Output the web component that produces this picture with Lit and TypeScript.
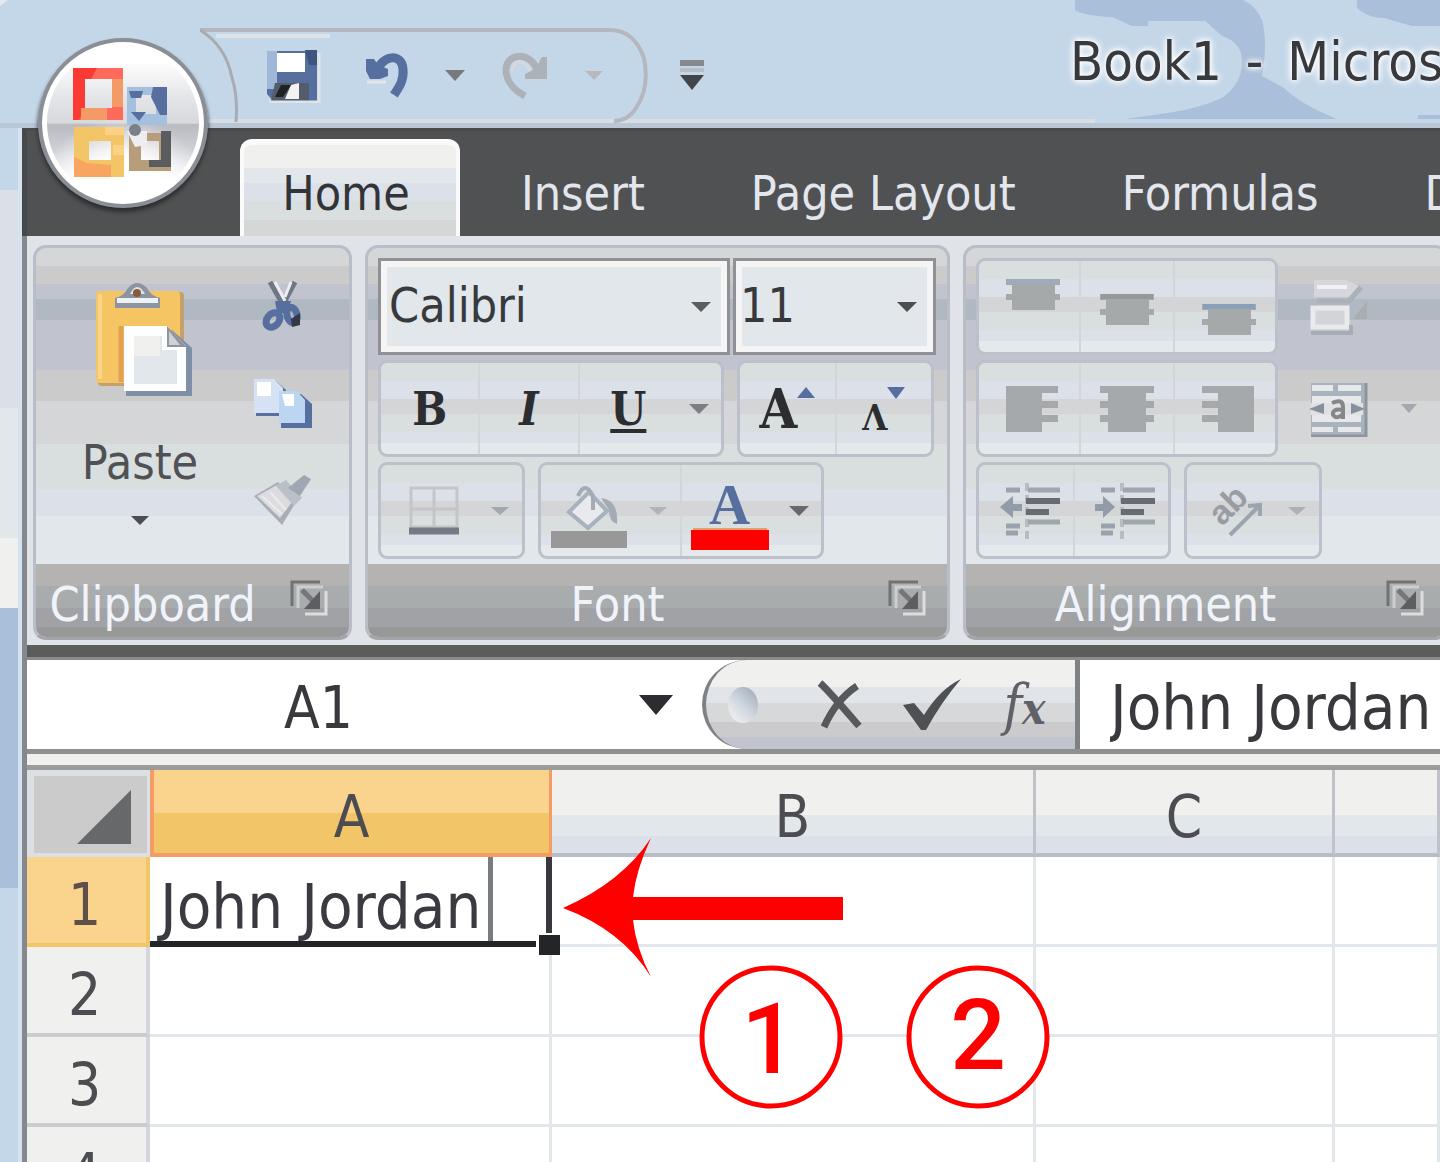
import { LitElement, html, css, svg } from "lit";
import { customElement, property } from "lit/decorators.js";

const down = (color: string, w = 20, h = 10) => html`<svg class="caret" width=${w} height=${h} viewBox="0 0 20 10" preserveAspectRatio="none" aria-hidden="true"><path d="M0 0H20L10 10Z" fill=${color} /></svg>`;
const up = (color: string) => html`<svg width="18" height="11" viewBox="0 0 18 11" aria-hidden="true"><path d="M0 11L9 0L18 11Z" fill=${color} /></svg>`;

const icon = (w: number, h: number, body: unknown) =>
  html`<svg class="icon" width=${w} height=${h} viewBox="0 0 ${w} ${h}" aria-hidden="true">${body}</svg>`;

const saveIcon = icon(54, 54, svg`
  <path d="M0 2H50V52H6L0 45Z" fill="#566f9e"/><path d="M0 2H10V40H0Z" fill="#9fb8da"/>
  <path d="M10 4H38V23H10Z" fill="#fff"/><path d="M38 1H50V16H42Z" fill="#3f557f"/>
  <path d="M8 34H42V52H4Z" fill="#555c69"/><path d="M24 36L32 34V50H18Z" fill="#f2f2f2"/><path d="M14 36H24L16 48H8Z" fill="#202126"/>
  <path d="M52 4V53H2" fill="none" stroke="#dfe3ea" stroke-width="3"/>`);

const undoIcon = icon(52, 50, svg`
  <path d="M14 22C20 3 40 2 41 18C42 30 37 36 32 44" fill="none" stroke="#566f9e" stroke-width="9"/>
  <path d="M4 8L12 8L16 14L26 18V25L18 28H8L4 20Z" fill="#566f9e"/><path d="M5 31H24" stroke="#e2e5ea" stroke-width="3"/>`);

const redoIcon = icon(52, 50, svg`
  <path d="M37 20C32 0 5 1 6 20C7 32 14 39 25 45" fill="none" stroke="#adb2b8" stroke-width="7"/>
  <path d="M47 6V28H25V23L35 18L42 6Z" fill="#adb2b8"/><path d="M12 20C14 8 24 8 30 20" fill="none" stroke="#d6d9dd" stroke-width="3"/>`);

const officeLogo = html`<svg class="logo" viewBox="0 0 108 116" aria-hidden="true">
  <path d="M5 4H52V54H5Z" fill="none" stroke="#b39b7c" stroke-width="2"/>
  <path fill-rule="evenodd" d="M4 3H54V55H4ZM16 14V43H43V14Z" fill="#ff6a5c"/>
  <path d="M4 3H28L22 14H16V43L10 55H4Z" fill="#fb3a34"/><path d="M43 14H54V42H43ZM12 43H38V55H12Z" fill="#f49a66"/>
  <path d="M58 22H98V60H58ZM67 30V49H87V30Z" fill-rule="evenodd" fill="#a5bfde"/>
  <path d="M84 22H98V50H91L82 32ZM60 26H74L72 33H62ZM62 47H77L70 56Z" fill="#566f9e"/>
  <path d="M5 62H55V112H5ZM20 76V95H42V76Z" fill-rule="evenodd" fill="#f4c566"/>
  <path d="M5 92L18 98L42 100V112H5Z" fill="#f8a562"/><path d="M36 62H55V70H36ZM44 80H55V90H44Z" fill="#fbd185"/>
  <path d="M60 68H102V106H60ZM72 76V95H90V76Z" fill-rule="evenodd" fill="#b79d7a"/>
  <path d="M92 66H102V102H80V95H92Z" fill="#5b5c60"/><path d="M58 66H78V80L66 82Z" fill="#eceef2"/><circle cx="66" cy="65" r="6" fill="#7b7f88"/>
</svg>`;

const pasteIcon = icon(100, 116, svg`
  <path d="M4 14Q4 10 8 10H86Q90 10 90 14V100Q90 104 86 104H8Q4 104 4 100Z" fill="#c4a06a"/>
  <path d="M2 12Q2 9 6 9H82Q86 9 86 13V98Q86 101 82 101H6Q2 101 2 98Z" fill="#f5c463"/>
  <path d="M6 12V97" stroke="#fbd48b" stroke-width="4"/><path d="M27 44V100" stroke="#e3a050" stroke-width="5"/>
  <path d="M21 16Q30 14 34 6Q43 -4 53 6Q57 14 66 16V26H21Z" fill="#8c94a2"/>
  <path d="M23 16H64V21H23Z" fill="#eef1f5"/><path d="M36 12Q43 -2 51 12Z" fill="#dfe5ee"/><circle cx="43" cy="11" r="4" fill="#8b5a34"/>
  <path d="M32 48H78L98 66V114H32Z" fill="#7f8fa5"/><path d="M30 44H73L92 64V109H30Z" fill="#fff"/>
  <path d="M40 54H68V68H83V102H40Z" fill="#e1e7ea"/><path d="M40 54H66V74H40Z" fill="#f0f0ee"/>
  <path d="M73 44L93 65H73Z" fill="#8f949d"/><path d="M75 49L86 63H75Z" fill="#cdd1d8"/>`);

const cutIcon = icon(44, 56, svg`
  <path d="M9 3L25 31M34 3L19 31" stroke="#707784" stroke-width="5"/><path d="M14 3L24 22M30 3L24 18" stroke="#eceef2" stroke-width="3"/>
  <ellipse cx="12" cy="41" rx="6" ry="8" fill="none" stroke="#566f9e" stroke-width="7" transform="rotate(40 12 41)"/>
  <ellipse cx="31" cy="36" rx="5" ry="8" fill="none" stroke="#566f9e" stroke-width="7" transform="rotate(-15 31 36)"/>
  <path d="M14 22H30L26 34H16Z" fill="#566f9e"/><path d="M30 40L39 34V46L31 48Z" fill="#33394a"/>`);

const copyIcon = icon(62, 52, svg`
  <path d="M4 3H24L34 12V38H4Z" fill="#566f9e"/><path d="M2 1H22L31 10V35H2Z" fill="#d4e2f3"/><path d="M5 4H19V18H5Z" fill="#fff"/>
  <path d="M29 16H49L60 26V50H29Z" fill="#566f9e"/><path d="M27 13H45L53 22V45H27Z" fill="#bcd5f0"/><path d="M30 16H42V28H33Z" fill="#fff"/>`);

const brushIcon = icon(62, 54, svg`
  <path d="M2 22L26 8L44 28L30 51Z" fill="#a9aeb6"/><path d="M5 22L25 11L40 28L28 44Z" fill="#dcdcdf"/><path d="M10 22L30 40M18 18L34 36" stroke="#ebebed" stroke-width="2"/>
  <path d="M24 12L34 6L50 24L42 32Z" fill="#b9c0c8"/><path d="M36 14L52 1L59 5L48 22Z" fill="#9fa8b2"/>`);

const bordersIcon = icon(50, 52, svg`
  <path d="M2 3H48V42H2ZM25 3V42M2 24H48" fill="none" stroke="#c3c5c9" stroke-width="3"/><path d="M0 46H50" stroke="#757b85" stroke-width="7"/>`);

const bucketIcon = icon(76, 66, svg`
  <path d="M18 28L38 8L56 27L37 44Z" fill="#e8eaed" stroke="#a7b2bd" stroke-width="4"/><path d="M27 12Q34 -4 42 12V26" fill="none" stroke="#a3abb5" stroke-width="4"/>
  <path d="M50 14Q68 16 66 40Q58 38 58 26Z" fill="#a3abb5"/><path d="M0 47H76V64H0Z" fill="#989898"/>`);

const fontColorIcon = icon(78, 66, svg`
  <path d="M0 46H78V66H0Z" fill="#ff0000"/><path d="M2 45H76" stroke="#e0a070" stroke-width="2"/>`);

const bars = (lines: number[][]) => icon(54, 54, lines.map(([x, y, w, h = 7]) => svg`<rect x=${x} y=${y} width=${w} height=${h} fill="#a6a9ab"/>`));
const stack = (y: number, accent: string) => icon(54, 56, svg`<path d="M0 ${y}H54V${y + 6}H49V${y + 15}H54V${y + 21}H49V${y + 31}H6V${y + 21}H0V${y + 15}H6V${y + 6}H0Z" fill="#a6a9aa"/><rect x="1" y=${y} width="52" height="5" fill=${accent}/>`);
const alignTop = stack(0, "#9fabb8");
const alignMiddle = stack(15, "#97989a");
const alignBottom = stack(25, "#8a9fb9");
const alignLeft = bars([[0, 4, 52], [0, 10, 36, 40], [0, 19, 52], [0, 33, 52]]);
const alignCenter = bars([[0, 4, 54], [8, 10, 38, 40], [0, 19, 54], [0, 33, 54]]);
const alignRight = bars([[0, 4, 52], [16, 10, 36, 40], [0, 19, 52], [0, 33, 52]]);

const indent = (arrow: string) => icon(60, 56, svg`
  <path d="M6 7H20M6 43H20M6 50H18" stroke="#9aa3ad" stroke-width="5"/><path d="M27 0V56" stroke="#b7bcc3" stroke-width="4" stroke-dasharray="8 4"/>
  <path d="M28 7H60M28 39H60" stroke="#a0a6ae" stroke-width="5"/><path d="M26 18H60M26 29H49" stroke="#686b72" stroke-width="6"/><path d=${arrow} fill="#929ca8"/>`);
const outdentIcon = indent("M0 24L13 13V21H22V28H13V35Z");
const indentIcon = indent("M20 24L8 13V21H0V28H8V35Z");

const orientationIcon = icon(60, 56, svg`
  <path d="M25 52L53 24M43 23L55 22L55 33" fill="none" stroke="#9ba5b0" stroke-width="4"/>
  <text x="17" y="44" transform="rotate(-45 17 44)" font-family="Liberation Sans" font-weight="700" font-size="34" fill="#999da3">ab</text>`);

const wrapIcon = icon(60, 64, svg`
  <path d="M5 5H38L52 12L40 22H5Z" fill="#d5d7dd"/><path d="M8 26H40L52 12" fill="none" stroke="#aab1ba" stroke-width="5"/><path d="M8 12H38" stroke="#f1f1f2" stroke-width="4"/>
  <path d="M4 33H38V52H4Z" fill="#d2d4da" stroke="#e9eaec" stroke-width="5"/><path d="M2 58H42V50" fill="none" stroke="#a6adb7" stroke-width="4"/><path d="M44 44L58 26V44Z" fill="#a9adb1"/>`);

const mergeIcon = icon(60, 56, svg`
  <path d="M2 2H56V54H2Z" fill="#a9b3be"/><path d="M3 4H24V10H3ZM29 4H52V10H29ZM3 15H52V22H3ZM3 34H52V41H3ZM3 46H24V51H3ZM29 46H52V51H29Z" fill="#e6e8ea"/>
  <path d="M2 22H54V34H2Z" fill="#dfe1e3"/><path d="M0 28L15 22V33ZM56 28L42 22V33Z" fill="#868f9b"/>
  <path d="M23 22Q34 17 34 26V38M34 29Q23 27 24 34Q28 39 34 33" fill="none" stroke="#85878b" stroke-width="4"/><path d="M57 2V55H2" fill="none" stroke="#8f959d" stroke-width="3"/>`);

const launcherIcon = icon(40, 40, svg`
  <path d="M3 29V5H31" fill="none" stroke="#707276" stroke-width="3"/><path d="M9 31V10H34" fill="none" stroke="#cdced0" stroke-width="3"/>
  <path d="M13 13L28 28" stroke="#75767a" stroke-width="5"/><path d="M31 14V32H15Z" fill="#5d5e62"/><path d="M37 14V37H16" fill="none" stroke="#dddddd" stroke-width="3"/>`);

const cancelIcon = icon(46, 50, svg`<path d="M4 3Q12 10 43 46" fill="none" stroke="#57585c" stroke-width="7"/><path d="M41 6Q20 20 8 47" fill="none" stroke="#57585c" stroke-width="7"/>`);
const enterIcon = icon(60, 52, svg`<path d="M1 26L12 24L22 36Q38 10 59 0Q40 22 24 51H19Z" fill="#4f5054"/>`);

@customElement("ribbon-group")
class RibbonGroup extends LitElement {
  @property() name = "";
  static styles = css`
    :host { display: flex; flex-direction: column; box-sizing: border-box; border: 3px solid #b9bdc7; border-bottom-color: #a3a5a8; border-radius: 13px; overflow: hidden;
      background: linear-gradient(#d5d6d8 0 18px, #cbcbcc 18px 36px, #c1c4cf 36px 51px, #b0b9c2 51px 72px, #c1c4ce 72px 122px, #cbcbcc 122px 153px, #d5d6d8 153px 196px, #d9dfdf 196px 241px, #dce0e8 241px 268px, #e1e7ea 268px); }
    .body { flex: 1; min-height: 0; }
    .foot { display: flex; height: 73px; align-items: center; background: linear-gradient(#b5b3b1 0 30%, #a8acad 30% 60%, #a1a2a6 60% 86%, #979998 86%); color: #f0f4fa; }
    .name { flex: 1; text-align: center; font-size: 48px; line-height: 60px; padding-top: 6px; }
    button { width: 80px; height: 60px; padding: 0; border: 0; background: none; }
    svg { display: block; margin: 0 auto 8px; }
  `;
  render() {
    return html`<div class="body"><slot></slot></div>
      <div class="foot"><span class="name">${this.name}</span><button aria-label="${this.name} options">${launcherIcon}</button></div>`;
  }
}

@customElement("app-root")
class AppRoot extends LitElement {
  static styles = css`
    :host { display: flex; flex-direction: column; position: relative; height: 100vh; overflow: hidden; background: #c4d7e9; color: #38393d;
      font-family: "DejaVu Sans Condensed", "Noto Sans", sans-serif; font-size: 48px; }
    * { box-sizing: border-box; }
    button, input, select { font: inherit; color: inherit; border: 0; margin: 0; padding: 0; background: none; border-radius: 0; outline: none; }
    button { display: flex; align-items: center; justify-content: center; flex: none; }
    svg { display: block; flex: none; }
    .title-bar { position: relative; display: flex; align-items: center; flex: none; height: 128px; padding-left: 240px; white-space: nowrap; border-bottom: 5px solid #b8c6d6; }
    .swoosh { position: absolute; inset: 0; width: 100%; height: 100%; }
    .quick { position: relative; display: flex; align-items: center; flex: none; height: 95px; width: 424px; margin-top: 28px; }
    .title-bar .quick, .customize { z-index: 1; }
    .outline { position: absolute; left: -40px; top: 0; }
    .w108 { width: 108px; } .w80 { width: 80px; } .w54 { width: 54px; } .w88 { width: 88px; } .w48 { width: 48px; }
    .customize { width: 56px; margin-top: 28px; }
    .title { position: relative; display: flex; gap: 24px; margin: 0 0 0 auto; width: 370px; font-size: 54px; line-height: 80px; font-weight: 400; text-shadow: 0 0 5px #fff, 0 0 7px #fff, 0 0 9px #f4f4f4; }
    .orb { position: absolute; z-index: 3; left: 38px; top: 38px; width: 170px; height: 170px; border-radius: 50%; border: 4px solid #8a8f96;
      background: radial-gradient(circle at 50% 100%, #fff 0 25%, #fff0 48%), linear-gradient(#fff 0 12%, #e4e5e8 34%, #d7d8db 50%, #b9bbc1 51%, #cfd0d5 66%, #fff 88%); box-shadow: inset 0 0 0 5px #fff, 0 4px 4px #2c2d30; }
    .logo { width: 108px; height: 116px; }
    .main { flex: 1; min-height: 0; display: flex; }
    .edge { flex: none; width: 22px; border-right: 4px solid #d5e3f1; background: linear-gradient(#c4d7e9 0 62px, #dbdfe8 62px 280px, #e1e7ea 280px 410px, #f0f0ef 410px 480px, #a9bfda 480px 760px, #c4d7e9 760px); }
    .window { flex: 1; min-width: 0; border-left: 5px solid #85898f; display: flex; flex-direction: column; background: #fff; }
    .tabs { flex: none; display: flex; height: 108px; padding: 8px 0 0 213px; margin-left: -5px; border-top: 3px solid #4a4a4b; background: #505153; color: #e3e7ed; white-space: nowrap; overflow: hidden; border-left: 5px solid #47484a; }
    .tab { flex: none; color: inherit; text-decoration: none; padding: 0 53px; line-height: 108px; height: 100px; }
    .tab.active { width: 220px; padding: 0 8px 0 0; margin-right: 8px; text-align: center; color: #333438; border-radius: 12px 12px 0 0; border: solid #fafafa; border-width: 6px 4px 0; line-height: 96px;
      background: linear-gradient(#f0f0ef 0 24%, #e1e7ea 24% 40%, #dce0e8 40% 60%, #d9dfdf 60% 80%, #d5d6d8 80%); }
    .ribbon { flex: none; display: flex; gap: 13px; height: 409px; padding: 9px 0 5px 6px; background: #e0e3e8; }
    .clip { width: 319px; } .font { width: 585px; } .align { flex: 1; min-width: 0; margin-right: -8px; }
    .dark { flex: none; height: 15px; background: #5c5c5b; border-bottom: 3px solid #8b8b8b; }
    .clip-body { display: grid; grid-template-columns: 208px 78px; padding-top: 10px; }
    .paste { flex-direction: column; height: 291px; justify-content: flex-start; padding-top: 24px; line-height: 60px; color: #505155; }
    .paste .icon { margin-left: 8px; } .paste span { margin-top: 34px; } .paste .caret { margin-top: 24px; }
    .side button { width: 78px; height: 97px; }
    .rows { display: flex; flex-direction: column; gap: 5px; padding: 10px 0 0 10px; }
    .row { display: flex; height: 97px; gap: 13px; }
    .combos { gap: 3px; }
    .set { display: flex; flex: none; border: 3px solid #bbc0ca; border-radius: 9px; overflow: hidden;
      background: linear-gradient(#d9dfdf 0 20%, #dce0e8 20% 40%, #d4d5d7 40% 56%, #d9dfdf 56% 76%, #dce0e8 76% 88%, #e4e9ec 88%); }
    .set button { flex: 1 1 0; } .set button + button { border-left: 2px solid #d2d5da; }
    .set button.more { flex: 0 0 44px; border-left: 0; }
    .set.s346 { width: 346px; } .set.s197 { width: 197px; } .set.s147 { width: 147px; } .set.s286 { width: 286px; } .set.s302 { width: 302px; } .set.s195 { width: 195px; } .set.s138 { width: 138px; }
    .combo { display: grid; align-items: center; background: #e1e7ea; border: 3px solid #8f9194; box-shadow: inset 0 0 0 6px #f5f5f5; }
    .combo.family { width: 352px; } .combo.size { width: 203px; }
    .combo select { grid-area: 1/1; width: 100%; height: 91px; appearance: none; padding: 0 0 4px 8px; }
    .combo.size select { padding-left: 4px; }
    .combo svg { grid-area: 1/1; justify-self: end; margin-right: 16px; pointer-events: none; }
    .serif { font-family: "DejaVu Serif Condensed", "Liberation Serif", serif; font-weight: 700; font-size: 46px; color: #2c2d31; }
    .italic { font-style: italic; } .under { text-decoration: underline 4px; text-underline-offset: 4px; }
    .grow { font-size: 54px; } .shrink { font-size: 36px; padding-top: 16px; }
    .grow svg, .shrink svg { align-self: flex-start; margin-top: 24px; } .shrink svg { margin-top: 8px; }
    .tinted { padding-top: 12px; } .nudge { padding-left: 8px; }
    .color { display: grid; place-items: center; place-content: center; color: #566f9e; }
    .color > * { grid-area: 1/1; } .color .letter { font-family: "Liberation Serif", serif; font-weight: 700; font-size: 57px; line-height: 60px; margin-bottom: 24px; }
    .loose { width: 96px; } .loose-more { width: 44px; margin-left: -13px; }
    .formula { flex: none; display: flex; height: 94px; border-bottom: 5px solid #8f9090; background: #fff; }
    .name-box { width: 583px; padding-top: 6px; text-align: center; font-size: 58px; }
    .name-more { width: 92px; }
    .capsule { flex: none; display: flex; align-items: center; width: 378px; padding-left: 22px; border: solid #7e8185; border-width: 0 5px 0 4px; border-radius: 45px 0 0 45px; background: linear-gradient(#f0f0ef 0 30%, #e1e5ea 30% 48%, #d7d8da 48% 70%, #cbcbcd 70% 86%, #c1c4ce 86%); }
    .dot { width: 30px; height: 36px; border-radius: 50%; margin-right: 34px; background: linear-gradient(225deg, #9ba7b5, #d2d9e0 55%, #f8f8f8); }
    .capsule button { width: 93px; height: 88px; }
    .fx { align-items: baseline; color: #606167; font-family: "DejaVu Serif Condensed", "Liberation Serif", serif; font-style: italic; font-size: 56px; line-height: 88px; }
    .fx small { font-size: 44px; font-weight: 700; }
    .entry { flex: 1; min-width: 0; padding: 6px 0 0 30px; font-size: 63px; }
    .gap { flex: none; height: 16px; background: #f0f0ef; border-bottom: 5px solid #9c9c9c; }
    table { width: 100%; table-layout: fixed; border-collapse: separate; border-spacing: 0; font-size: 58px; line-height: 72px; color: #4c4d51; }
    th, td { padding: 0; font-weight: 400; overflow: hidden; }
    th { padding-top: 10px; }
    .c0 { width: 123px; } .c1 { width: 402px; } .c2 { width: 484px; } .c3 { width: 299px; }
    thead th { height: 87px; border-right: 3px solid #bfc2c8; border-bottom: 4px solid #b8bcc6; background: linear-gradient(#f0f0ef 0 54%, #e1e7ea 54% 80%, #dce0e8 80%); }
    thead th.sel { border-color: #f59b68; border-left: 4px solid #f59b68; background: linear-gradient(#fad48c 0 52%, #f1c568 52%); }
    thead th.corner { padding: 0; background: #cbcbcc; border: 6px solid #dce0e5; border-width: 6px 3px 4px 7px; }
    .corner svg { margin: 4px 16px 0 auto; }
    tbody th { height: 90px; background: #f0f0ef; border-right: 4px solid #d3d6dc; border-bottom: 4px solid #cbcccd; padding-right: 4px; }
    tbody th.sel { background: #fad48c; border-color: #f1c568; color: #5e5048; }
    td { border-right: 3px solid #e1e7ea; border-bottom: 3px solid #e1e7ea; background: #fff; }
    td.active { position: relative; overflow: visible; border-right: 6px solid #38393d; border-bottom: 6px solid #242529; }
    .editing { display: block; width: 343px; height: 84px; padding-left: 10px; border-right: 5px solid #787b80; font-size: 63px; line-height: 100px; white-space: nowrap; color: #3a3b40; }
    .handle { position: absolute; right: -14px; bottom: -14px; width: 24px; height: 22px; background: #242529; border: solid #fff; border-width: 2px 0 0 3px; }
    .notes { position: absolute; left: 560px; top: 836px; z-index: 4; pointer-events: none; }
  `;

  render() {
    return html`
      <header class="title-bar">
        <svg class="swoosh" viewBox="0 0 1440 123" preserveAspectRatio="xMaxYMin slice" aria-hidden="true">
          <g fill="#a9bfda"><path d="M1075 0V10Q1084 16 1112 17L1132 26H1148V21H1205L1222 36Q1242 42 1242 62Q1242 84 1222 98Q1200 108 1168 113L1125 119H1337Q1300 104 1284 88L1262 76Q1268 44 1262 20Q1256 6 1243 0Z"/>
          <path d="M1357 0V8Q1368 18 1384 18L1412 26H1440V0ZM1418 119V115H1440V119Z"/></g>
          <path d="M0 0H8L0 6Z" fill="#e3e8ee"/><path d="M205 121H1095" stroke="#d8dde4" stroke-width="4"/>
        </svg>
        <button class="orb" aria-label="Office Button">${officeLogo}</button>
        <nav class="quick" aria-label="Quick Access">
          <svg class="outline" width="452" height="96" viewBox="0 0 452 96" aria-hidden="true">
            <path d="M0 2H410Q434 2 444 30Q450 60 436 80Q428 93 414 93" fill="none" stroke="#b4b8be" stroke-width="4"/>
            <path d="M0 2Q26 18 32 50Q38 68 36 94" fill="none" stroke="#a7acb3" stroke-width="3"/><path d="M16 8H130" stroke="#dfe3ea" stroke-width="4"/>
          </svg>
          <button class="w108" aria-label="Save">${saveIcon}</button>
          <button class="w80" aria-label="Undo">${undoIcon}</button>
          <button class="w54" aria-label="Undo list">${down("#77797e", 20, 11)}</button>
          <button class="w88" aria-label="Redo">${redoIcon}</button>
          <button class="w48" aria-label="Redo list">${down("#b9b9bb", 18, 9)}</button>
        </nav>
        <button class="customize" aria-label="Customize Quick Access">${icon(26, 32, svg`<path d="M1 3H25" stroke="#85888d" stroke-width="6"/><path d="M1 10H25" stroke="#b6bcc4" stroke-width="4"/><path d="M1 15H25L13 30Z" fill="#434448"/>`)}</button>
        <h1 class="title"><span>Book1</span><span>-</span><span>Micros</span></h1>
      </header>
      <div class="main">
        <div class="edge"></div>
        <main class="window">
          <nav class="tabs">
            <a class="tab active" href="#home">Home</a><a class="tab" href="#insert">Insert</a><a class="tab" href="#layout">Page Layout</a><a class="tab" href="#formulas">Formulas</a><a class="tab" href="#d">D</a>
          </nav>
          <section class="ribbon">
            <ribbon-group class="clip" name="Clipboard"><div class="clip-body">
              <button class="paste">${pasteIcon}<span>Paste</span>${down("#4d4e52", 18, 9)}</button>
              <div class="side"><button aria-label="Cut">${cutIcon}</button><button aria-label="Copy">${copyIcon}</button><button aria-label="Format Painter">${brushIcon}</button></div>
            </div></ribbon-group>
            <ribbon-group class="font" name="Font"><div class="rows">
              <div class="row combos">
                <div class="combo family"><select aria-label="Font"><option>Calibri</option></select>${down("#5b5c60")}</div>
                <div class="combo size"><select aria-label="Font size"><option>11</option></select>${down("#4d4e52")}</div>
              </div>
              <div class="row">
                <div class="set s346"><button class="serif">B</button><button class="serif italic">I</button><button class="serif under">U</button><button class="more" aria-label="Underline styles">${down("#7b7e83")}</button></div>
                <div class="set s197"><button class="serif grow" aria-label="Grow font">A${up("#566f9e")}</button><button class="serif shrink" aria-label="Shrink font">Λ${down("#566f9e", 18, 12)}</button></div>
              </div>
              <div class="row">
                <div class="set s147"><button class="nudge" aria-label="Borders">${bordersIcon}</button><button class="more" aria-label="Border styles">${down("#a2a8b0", 18, 8)}</button></div>
                <div class="set s286"><button class="tinted" aria-label="Fill color">${bucketIcon}</button><button class="more" aria-label="Fill colors">${down("#b0b4ba", 18, 8)}</button><button class="tinted color" aria-label="Font color">${fontColorIcon}<span class="letter">A</span></button><button class="more" aria-label="Font colors">${down("#66686c")}</button></div>
              </div>
            </div></ribbon-group>
            <ribbon-group class="align" name="Alignment"><div class="rows">
              <div class="row"><div class="set s302"><button class="nudge" aria-label="Top align">${alignTop}</button><button aria-label="Middle align">${alignMiddle}</button><button class="nudge" aria-label="Bottom align">${alignBottom}</button></div>
                <button class="loose" aria-label="Wrap text">${wrapIcon}</button></div>
              <div class="row"><div class="set s302"><button class="nudge" aria-label="Align left">${alignLeft}</button><button aria-label="Center">${alignCenter}</button><button class="nudge" aria-label="Align right">${alignRight}</button></div>
                <button class="loose" aria-label="Merge">${mergeIcon}</button><button class="loose-more" aria-label="Merge options">${down("#a3a8b0", 16, 9)}</button></div>
              <div class="row"><div class="set s195"><button class="nudge" aria-label="Decrease indent">${outdentIcon}</button><button class="nudge" aria-label="Increase indent">${indentIcon}</button></div>
                <div class="set s138"><button class="nudge" aria-label="Orientation">${orientationIcon}</button><button class="more" aria-label="Orientations">${down("#adb0b4", 18, 8)}</button></div></div>
            </div></ribbon-group>
          </section>
          <div class="dark"></div>
          <section class="formula">
            <input class="name-box" aria-label="Name box" .value=${"A1"} />
            <button class="name-more" aria-label="Names">${down("#2c2d31", 34, 20)}</button>
            <div class="capsule"><span class="dot"></span>
              <button aria-label="Cancel">${cancelIcon}</button><button aria-label="Enter">${enterIcon}</button><button class="fx" aria-label="Insert function">f<small>x</small></button></div>
            <input class="entry" aria-label="Formula" .value=${"John Jordan"} />
          </section>
          <div class="gap"></div>
          <table>
            <colgroup><col class="c0" /><col class="c1" /><col class="c2" /><col class="c3" /><col /></colgroup>
            <thead><tr><th class="corner"><svg width="54" height="54" viewBox="0 0 54 54" aria-hidden="true"><path d="M54 0V54H0Z" fill="#67686a"/></svg></th>
              <th class="sel">A</th><th>B</th><th>C</th><th></th></tr></thead>
            <tbody>
              <tr><th class="sel">1</th><td class="active"><span class="editing">John Jordan</span><span class="handle"></span></td><td></td><td></td><td></td></tr>
              ${[2, 3, 4].map((n) => html`<tr><th>${n}</th><td></td><td></td><td></td><td></td></tr>`)}
            </tbody>
          </table>
        </main>
      </div>
      <svg class="notes" width="500" height="280" viewBox="560 836 500 280">
        <path d="M563 908Q622 882 651 838Q636 870 633 897H843V920H633Q636 948 651 977Q622 930 563 908Z" fill="#ff0000"/>
        <g fill="#fff" stroke="#ff0000" stroke-width="5"><circle cx="771" cy="1037" r="69"/><circle cx="978" cy="1037" r="69"/></g>
        <g fill="#ff0000" font-family="Roboto" font-weight="500" font-size="98" text-anchor="middle"><text x="769" y="1073">1</text><text x="978" y="1069">2</text></g>
      </svg>
    `;
  }
}
